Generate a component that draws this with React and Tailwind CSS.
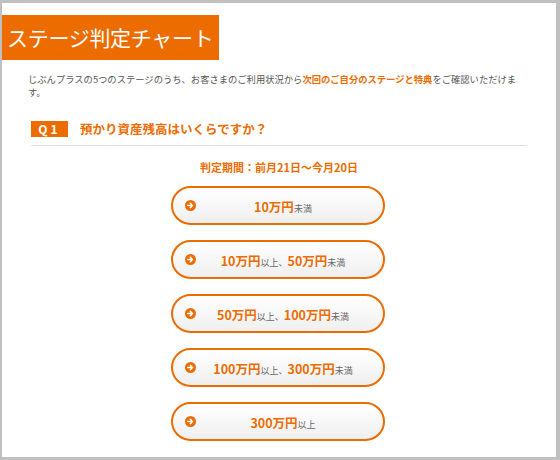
const font = { fontFamily: '"Noto Sans CJK JP", "Noto Sans", sans-serif' }

const options = [
  [['10万円', true], ['未満', false]],
  [['10万円', true], ['以上、', false], ['50万円', true], ['未満', false]],
  [['50万円', true], ['以上、', false], ['100万円', true], ['未満', false]],
  [['100万円', true], ['以上、', false], ['300万円', true], ['未満', false]],
  [['300万円', true], ['以上', false]],
]

function Arrow() {
  return (
    <svg width="11" height="11" viewBox="0 0 12 12" className="shrink-0">
      <circle cx="6" cy="6" r="6" fill="#ec6c00" />
      <path d="M3 6h5M5.8 3.6L8.2 6 5.8 8.4" stroke="#fff" strokeWidth="1.7" fill="none" strokeLinecap="round" strokeLinejoin="round" />
    </svg>
  )
}

export default function App() {
  return (
    <div
      style={font}
      className="h-[460px] w-[560px] overflow-hidden border-t-[3px] border-l-[2px] border-r-[4px] border-b-[3px] border-[#c0c0c0] bg-white"
    >
      <div className="mt-[12px] flex h-[45px] w-[217px] items-center bg-[#ec6c00] pl-[5px]">
        <h1 className="text-[21px] font-normal leading-none tracking-[-0.3px] text-white">
          ステージ判定チャート
        </h1>
      </div>

      <p className="mt-[13px] pl-[26px] pr-[36px] text-[9.3px] leading-[13px] text-[#555]">
        じぶんプラスの5つのステージのうち、お客さまのご利用状況から
        <span className="font-bold text-[#ec6c00]">次回のご自分のステージと特典</span>
        をご確認いただけます。
      </p>

      <div className="mx-[29px] mt-[22px] flex items-center gap-[12px] border-b border-[#e0e0e0] pb-[8px]">
        <span className="flex h-[16px] w-[37px] items-center justify-center bg-[#ec6c00] text-[12px] font-bold leading-none tracking-[3px] text-white">
          Q1
        </span>
        <span className="text-[12.5px] font-bold leading-none text-[#ec6c00]">
          預かり資産残高はいくらですか？
        </span>
      </div>

      <p className="mt-[16px] text-center text-[11px] font-bold leading-none text-[#ec6c00]">
        判定期間：前月21日〜今月20日
      </p>

      <div className="mt-[13px] flex flex-col items-center gap-[15px]">
        {options.map((parts, i) => (
          <button
            key={i}
            className="ml-[-3px] flex h-[39px] w-[214px] items-center rounded-full border-2 border-[#ec6c00] bg-gradient-to-b from-white to-[#efefef] pl-[12px] pr-[12px]"
          >
            <Arrow />
            <span className="flex-1 text-center leading-none">
              {parts.map(([t, b], j) =>
                b ? (
                  <span key={j} className="text-[12.5px] font-bold text-[#ec6c00]">{t}</span>
                ) : (
                  <span key={j} className="text-[9px] text-[#666]">{t}</span>
                )
              )}
            </span>
          </button>
        ))}
      </div>
    </div>
  )
}
